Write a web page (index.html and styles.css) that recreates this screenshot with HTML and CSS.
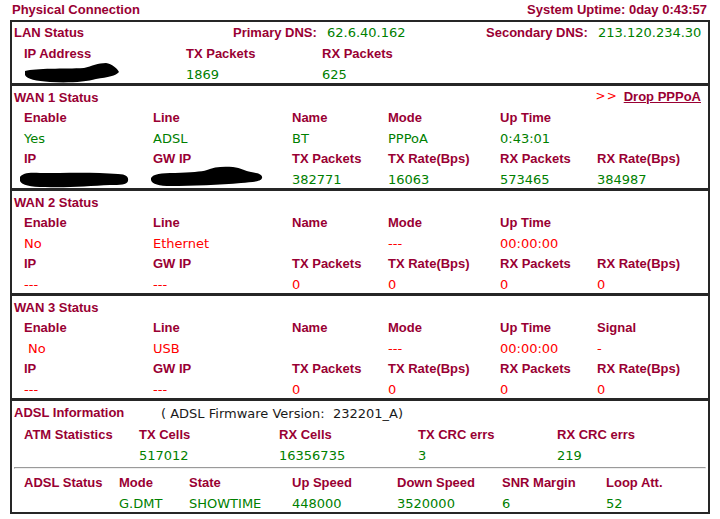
FILE: index.html
```html
<!DOCTYPE html>
<html>
<head>
<meta charset="utf-8">
<title>Physical Connection</title>
<link rel="stylesheet" href="styles.css">
</head>
<body>
<div class="topbar">
  <span class="lbl">Physical Connection</span>
  <span class="lbl">System Uptime: 0day 0:43:57</span>
</div>

<div class="panel">
  <!-- LAN -->
  <section class="sec lan">
    <div class="lan-head">
      <span class="lbl">LAN Status</span>
      <span class="lbl">Primary DNS:</span>
      <span class="val ok">62.6.40.162</span>
      <span class="lbl">Secondary DNS:</span>
      <span class="val ok">213.120.234.30</span>
    </div>
    <div class="lan-grid">
      <span class="lbl">IP Address</span>
      <span class="lbl">TX Packets</span>
      <span class="lbl">RX Packets</span>
      <span class="val ok redact">
        <svg class="blob" width="100" height="24" viewBox="0 0 100 24">
          <path d="M1 9 C12 6 40 7 60 6 C68 4 74 1 82 1 C88 2 93 6 95 10 C92 14 84 15 72 17 C62 20 44 21 26 20 C12 19 3 17 1 13 Z" fill="#000"/>
        </svg>
      </span>
      <span class="val ok">1869</span>
      <span class="val ok">625</span>
    </div>
  </section>

  <!-- WAN 1 -->
  <section class="sec">
    <div class="sec-head">
      <span class="lbl">WAN 1 Status</span>
      <span class="drop"><span class="arrows">&gt;&gt;</span> <a class="lbl link" href="#">Drop PPPoA</a></span>
    </div>
    <div class="wan-grid">
      <span class="lbl">Enable</span><span class="lbl">Line</span><span class="lbl">Name</span><span class="lbl">Mode</span><span class="lbl">Up Time</span><span></span>
      <span class="val ok">Yes</span><span class="val ok">ADSL</span><span class="val ok">BT</span><span class="val ok">PPPoA</span><span class="val ok">0:43:01</span><span></span>
      <span class="lbl">IP</span><span class="lbl">GW IP</span><span class="lbl">TX Packets</span><span class="lbl">TX Rate(Bps)</span><span class="lbl">RX Packets</span><span class="lbl">RX Rate(Bps)</span>
      <span class="val ok redact">
        <svg class="blob blob-ip" width="112" height="20" viewBox="0 0 112 20">
          <path d="M0 8 C2 4 10 3 20 4 C45 4 75 3 98 5 C106 5 109 8 108 12 C107 16 100 16 90 16 C70 17 45 19 25 18 C10 18 2 16 0 12 Z" fill="#000"/>
        </svg>
      </span>
      <span class="val ok redact">
        <svg class="blob blob-gw" width="116" height="22" viewBox="0 0 116 22">
          <path d="M0 12 C2 8 10 7 24 7 C40 6 50 6 56 4 C62 1 72 0 82 1 C90 2 94 5 100 6 C108 7 112 9 111 12 C110 16 100 16 90 17 C70 19 40 20 20 20 C8 20 1 18 0 14 Z" fill="#000"/>
        </svg>
      </span>
      <span class="val ok">382771</span><span class="val ok">16063</span><span class="val ok">573465</span><span class="val ok">384987</span>
    </div>
  </section>

  <!-- WAN 2 -->
  <section class="sec">
    <div class="sec-head"><span class="lbl">WAN 2 Status</span></div>
    <div class="wan-grid">
      <span class="lbl">Enable</span><span class="lbl">Line</span><span class="lbl">Name</span><span class="lbl">Mode</span><span class="lbl">Up Time</span><span></span>
      <span class="val bad">No</span><span class="val bad">Ethernet</span><span></span><span class="val bad">---</span><span class="val bad">00:00:00</span><span></span>
      <span class="lbl">IP</span><span class="lbl">GW IP</span><span class="lbl">TX Packets</span><span class="lbl">TX Rate(Bps)</span><span class="lbl">RX Packets</span><span class="lbl">RX Rate(Bps)</span>
      <span class="val bad">---</span><span class="val bad">---</span><span class="val bad">0</span><span class="val bad">0</span><span class="val bad">0</span><span class="val bad">0</span>
    </div>
  </section>

  <!-- WAN 3 -->
  <section class="sec">
    <div class="sec-head"><span class="lbl">WAN 3 Status</span></div>
    <div class="wan-grid">
      <span class="lbl">Enable</span><span class="lbl">Line</span><span class="lbl">Name</span><span class="lbl">Mode</span><span class="lbl">Up Time</span><span class="lbl">Signal</span>
      <span class="val bad indent">No</span><span class="val bad">USB</span><span></span><span class="val bad">---</span><span class="val bad">00:00:00</span><span class="val bad">-</span>
      <span class="lbl">IP</span><span class="lbl">GW IP</span><span class="lbl">TX Packets</span><span class="lbl">TX Rate(Bps)</span><span class="lbl">RX Packets</span><span class="lbl">RX Rate(Bps)</span>
      <span class="val bad">---</span><span class="val bad">---</span><span class="val bad">0</span><span class="val bad">0</span><span class="val bad">0</span><span class="val bad">0</span>
    </div>
  </section>

  <!-- ADSL -->
  <section class="sec adsl">
    <div class="adsl-head">
      <span class="lbl">ADSL Information</span>
      <span class="val fw">( ADSL Firmware Version:&nbsp; 232201_A)</span>
    </div>
    <div class="atm-grid">
      <span class="lbl">ATM Statistics</span><span class="lbl">TX Cells</span><span class="lbl">RX Cells</span><span class="lbl">TX CRC errs</span><span class="lbl">RX CRC errs</span>
      <span></span><span class="val ok">517012</span><span class="val ok">16356735</span><span class="val ok">3</span><span class="val ok">219</span>
    </div>
    <hr class="rule">
    <div class="line-grid">
      <span class="lbl">ADSL Status</span><span class="lbl">Mode</span><span class="lbl">State</span><span class="lbl">Up Speed</span><span class="lbl">Down Speed</span><span class="lbl">SNR Margin</span><span class="lbl">Loop Att.</span>
      <span></span><span class="val ok">G.DMT</span><span class="val ok">SHOWTIME</span><span class="val ok">448000</span><span class="val ok">3520000</span><span class="val ok">6</span><span class="val ok">52</span>
    </div>
  </section>
</div>
</body>
</html>
```

FILE: styles.css
```css
html, body {
  margin: 0;
  padding: 0;
  background: #fff;
}

body {
  font-family: "Liberation Sans", Arial, sans-serif;
  font-size: 13px;
}

.lbl {
  font-family: "Liberation Sans", Arial, sans-serif;
  font-weight: bold;
  font-size: 13px;
  color: #990033;
  white-space: nowrap;
}

.val {
  font-family: "DejaVu Sans", Verdana, sans-serif;
  font-size: 13px;
  white-space: nowrap;
}

.ok { color: #008000; }
.bad { color: #ff0000; }
.indent { padding-left: 4px; }

.topbar {
  height: 20px;
  line-height: 20px;
  display: flex;
  justify-content: space-between;
  padding: 0 13px 0 12px;
}

.panel {
  margin-left: 10px;
  width: 700px;
  box-sizing: border-box;
  border: 2px solid #262626;
}

.sec + .sec {
  border-top: 3px solid #262626;
}

.sec span {
  display: flex;
  align-items: center;
}

/* cells sit a touch below the row middle */
.sec .lbl { padding-top: 2px; }
.sec .val { padding-top: 3px; }
.lan-head .lbl { padding-top: 0; }
.lan-head .val { padding-top: 1px; }

/* LAN block */
.lan-head {
  height: 20px;
  display: grid;
  grid-template-columns: 219px 94px 159px 112px 1fr;
  padding-left: 2px;
}

.lan-grid {
  display: grid;
  grid-template-columns: 162px 136px 1fr;
  grid-template-rows: 20.5px 20.5px;
  padding-left: 12px;
}

.redact {
  position: relative;
}

.blob {
  position: absolute;
  left: 0;
  top: 0;
}

.lan-grid .blob { left: 0; top: -1px; }
.blob-ip { left: -4px; top: 1px; }
.blob-gw { left: -2px; top: -2px; }

/* WAN blocks */
.sec-head {
  height: 20.4px;
  display: flex;
  justify-content: space-between;
  padding: 0 7px 0 2px;
}

.sec-head .drop .lbl,
.sec-head .drop .arrows { padding-top: 0; }

.arrows {
  font-family: "DejaVu Sans", Verdana, sans-serif;
  font-size: 12px;
  color: #ff0000;
  letter-spacing: 1px;
  margin-right: 6px;
  margin-left: 3px;
}

.link {
  text-decoration: underline;
}

.wan-grid {
  display: grid;
  grid-template-columns: 129px 139px 96px 112px 97px 1fr;
  grid-auto-rows: 20.4px;
  padding-left: 12px;
}

/* ADSL block */
.adsl-head {
  height: 22px;
  display: grid;
  grid-template-columns: 147px 1fr;
  padding-left: 2px;
}

.fw {
  color: #1a1a1a;
}

.atm-grid {
  display: grid;
  grid-template-columns: 115px 140px 139px 139px 1fr;
  grid-template-rows: 21px 21px;
  padding-left: 12px;
}

.rule {
  margin: 2px 2px 2px 2px;
  height: 0;
  border-top: 1px solid #9a9a9a;
  border-left: 1px solid #9a9a9a;
  border-bottom: 1px solid #eeeeee;
  border-right: 1px solid #eeeeee;
}

.line-grid {
  display: grid;
  grid-template-columns: 95px 70px 103px 105px 105px 104px 1fr;
  grid-template-rows: 21px 20px;
  padding-left: 12px;
}
```
